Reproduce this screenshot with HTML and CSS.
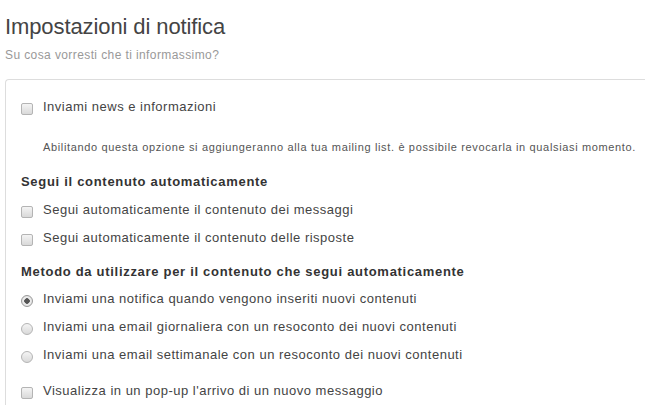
FILE: index.html
```html
<!DOCTYPE html>
<html lang="it">
<head>
    <meta charset="UTF-8">
    <meta name="viewport" content="width=device-width, initial-scale=1.0">
    <title>Impostazioni di notifica</title>
    <link rel="stylesheet" href="styles.css">
</head>
<body>
    <div class="page">
        <h1 class="title">Impostazioni di notifica</h1>
        <p class="subtitle">Su cosa vorresti che ti informassimo?</p>

        <form class="panel">
            <label class="row row-first">
                <input type="checkbox" class="check" name="news">
                <span>Inviami news e informazioni</span>
            </label>
            <p class="hint">Abilitando questa opzione si aggiungeranno alla tua mailing list. è possibile revocarla in qualsiasi momento.</p>

            <h3 class="section">Segui il contenuto automaticamente</h3>
            <div class="group group-follow">
                <label class="row">
                    <input type="checkbox" class="check" name="follow_messages">
                    <span>Segui automaticamente il contenuto dei messaggi</span>
                </label>
                <label class="row">
                    <input type="checkbox" class="check" name="follow_replies">
                    <span>Segui automaticamente il contenuto delle risposte</span>
                </label>
            </div>

            <h3 class="section section-second">Metodo da utilizzare per il contenuto che segui automaticamente</h3>
            <div class="group">
                <label class="row">
                    <input type="radio" class="radio" name="method" value="instant" checked>
                    <span>Inviami una notifica quando vengono inseriti nuovi contenuti</span>
                </label>
                <label class="row">
                    <input type="radio" class="radio" name="method" value="daily">
                    <span>Inviami una email giornaliera con un resoconto dei nuovi contenuti</span>
                </label>
                <label class="row">
                    <input type="radio" class="radio" name="method" value="weekly">
                    <span>Inviami una email settimanale con un resoconto dei nuovi contenuti</span>
                </label>
            </div>

            <label class="row row-last">
                <input type="checkbox" class="check" name="popup">
                <span>Visualizza in un pop-up l'arrivo di un nuovo messaggio</span>
            </label>
        </form>
    </div>
</body>
</html>
```

FILE: styles.css
```css
body {
    font-family: "Liberation Sans", Arial, sans-serif;
    background-color: white;
    color: #333;
    margin: 0;
    height: 406px;
    overflow: hidden;
}

.page {
    padding-left: 5px;
}

.title {
    margin: 14px 0 0;
    font-size: 22px;
    line-height: 26px;
    font-weight: normal;
    letter-spacing: -0.1px;
    color: #444;
}

.subtitle {
    margin: 7px 0 0;
    font-size: 12px;
    line-height: 16px;
    letter-spacing: 0.4px;
    color: #999;
}

.panel {
    margin-top: 16px;
    padding: 13px 15px 0;
    border: 1px solid #ddd;
    border-right: none;
    border-bottom: none;
    border-radius: 4px 0 0 0;
}

.row {
    display: flex;
    align-items: center;
    height: 28px;
    font-size: 13px;
    line-height: 18px;
    letter-spacing: 0.5px;
    color: #444;
    white-space: nowrap;
}

.row span {
    margin-left: 10px;
}

.check,
.radio {
    appearance: none;
    -webkit-appearance: none;
    width: 12px;
    height: 12px;
    margin: 4px 0 0;
    border: 1px solid #b4b4b4;
    background: linear-gradient(#f4f4f4, #d9d9d9);
    box-sizing: border-box;
    flex-shrink: 0;
}

.check {
    border-radius: 2px;
}

.radio {
    border-radius: 50%;
}

.radio:checked {
    background: radial-gradient(circle, #555 0, #555 2.5px, #eee 3px, #d9d9d9 100%);
    border-color: #999;
}

.hint {
    margin: 19px 0 0 22px;
    font-size: 11px;
    line-height: 14px;
    letter-spacing: 0.65px;
    color: #555;
    white-space: nowrap;
}

.section {
    margin: 19px 0 0;
    font-size: 13px;
    line-height: 18px;
    font-weight: bold;
    letter-spacing: 0.7px;
    color: #333;
}

.section-second {
    margin-top: 11px;
}

.group {
    margin-top: 4px;
}

.group-follow {
    margin-top: 5px;
}

.row-last {
    margin-top: 8px;
}
```
